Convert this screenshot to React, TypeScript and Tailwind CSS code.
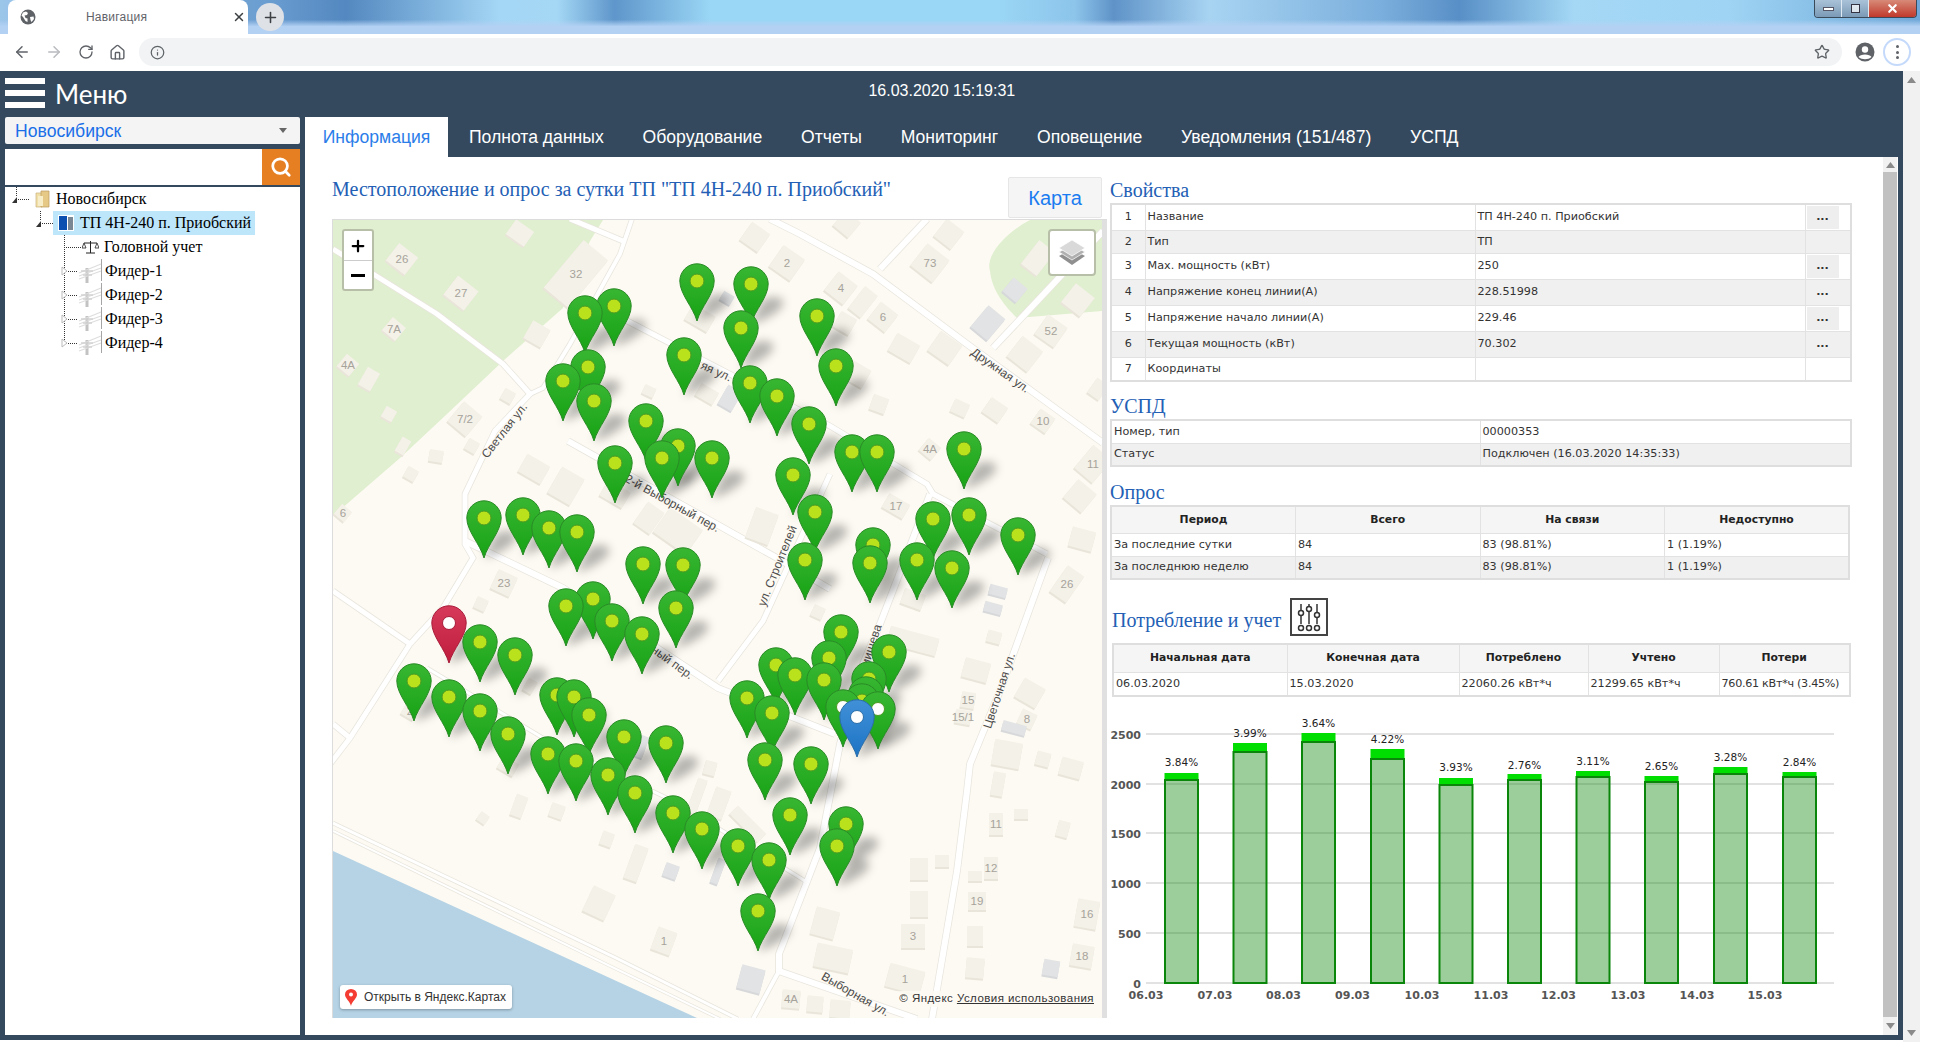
import { Fragment } from "react";
import { ArrowLeft, ArrowRight, RotateCw, Home, Info, Star, Plus, X, Search } from "lucide-react";

const TABS = ["Полнота данных", "Оборудование", "Отчеты", "Мониторинг", "Оповещение", "Уведомления (151/487)", "УСПД"];

const PROPS = [
  ["1", "Название", "ТП 4Н-240 п. Приобский", "btn"],
  ["2", "Тип", "ТП", ""],
  ["3", "Max. мощность (кВт)", "250", "btn"],
  ["4", "Напряжение конец линии(А)", "228.51998", "dots"],
  ["5", "Напряжение начало линии(А)", "229.46", "btn"],
  ["6", "Текущая мощность (кВт)", "70.302", "dots"],
  ["7", "Координаты", "", ""],
];

// dot centres of the map pins, in page pixels
const PINS: [number, number][] = [
  [697, 280], [751, 283], [817, 315], [741, 327], [614, 305], [585, 312], [588, 366], [563, 380], [594, 400],
  [684, 354], [750, 382], [777, 395], [809, 423], [836, 365], [646, 420], [678, 445], [662, 457], [712, 457],
  [615, 462], [793, 474], [852, 451], [877, 451], [964, 448], [815, 511], [805, 559], [484, 517], [523, 514],
  [549, 527], [577, 531], [643, 563], [683, 564], [676, 607], [593, 598], [566, 605], [612, 620], [642, 633],
  [873, 544], [870, 562], [933, 518], [969, 514], [1018, 534], [917, 559], [952, 567], [480, 641], [515, 654],
  [414, 680], [449, 696], [480, 710], [508, 733], [557, 694], [574, 696], [589, 714], [624, 736], [666, 742],
  [548, 753], [576, 760], [608, 774], [635, 792], [673, 812], [702, 828], [738, 845], [769, 859], [758, 910],
  [790, 814], [846, 823], [837, 845], [765, 759], [811, 763], [772, 712], [747, 697], [776, 664], [795, 674],
  [824, 679], [829, 657], [841, 631], [889, 651], [869, 678], [866, 693], [862, 700],
].sort((a, b) => a[1] - b[1]) as [number, number][];
const WHITE_PINS: [number, number][] = [[843, 706], [878, 708]];

const ROADS: [string, number][] = [
  ["M333 248L373 273L437 313L503 363L530 393L495 430L465 493L465 543L473 557L443 607L410 643L350 737L330 763", 5],
  ["M530 393L543 387L570 343L620 253L632 218", 4],
  ["M570 218L623 240", 5],
  ["M770 218L800 233L873 273L967 343L1103 442", 6],
  ["M880 268L927 218", 6],
  ["M993 347L1103 230", 6],
  ["M568 440L777 557L830 588", 6],
  ["M612 312L830 425L927 483L933 493L1047 553", 5],
  ["M1048 557L1000 690L970 763L967 790L957 870L932 1018", 6],
  ["M830 473L763 620L718 680", 5],
  ["M930 493L880 623L863 663L840 743L820 847L779 953L779 970L917 1018", 6],
  ["M779 970L753 1018", 4],
  ["M465 540L563 587L657 647L718 687L835 733", 6],
  ["M333 590L410 643", 5],
  ["M333 723L350 737", 5],
  ["M427 667L543 737L673 800L789 870L805 880", 3],
  ["M333 822L616 957L738 1018", 3],
  ["M333 830L610 965L720 1018", 2],
];

// cx, cy, w, h, rotation, label, grey
const BLDS: [number, number, number, number, number, string?, boolean?][] = [
  [402, 258, 24, 22, 38, "26"], [461, 292, 26, 24, 38, "27"], [394, 328, 17, 17, 40, "7A"], [348, 364, 16, 16, 40, "4A"],
  [369, 378, 14, 20, 30], [520, 232, 22, 18, 35], [576, 273, 32, 62, 40, "32"], [537, 333, 20, 20, 30],
  [465, 418, 24, 26, 40, "7/2"], [508, 395, 12, 12, 30], [389, 413, 12, 12, 30], [403, 445, 10, 16, 30],
  [472, 445, 12, 12, 30], [436, 455, 14, 12, 10], [411, 473, 12, 12, 30], [343, 512, 13, 13, 40, "6"],
  [534, 468, 26, 20, 30], [566, 485, 26, 30, 30], [649, 517, 20, 26, 35], [678, 530, 40, 30, 35], [762, 525, 24, 32, 20],
  [504, 582, 21, 21, 25, "23"], [481, 603, 12, 12, 25], [787, 262, 26, 26, 35, "2"], [755, 236, 22, 22, 35],
  [727, 297, 12, 10, 30, undefined, true], [700, 317, 26, 18, 30], [730, 397, 16, 22, 30, undefined, true],
  [707, 393, 20, 14, 30], [649, 390, 12, 10, 25], [615, 493, 26, 18, 30], [930, 262, 28, 28, 38, "73"],
  [949, 233, 22, 22, 38], [847, 223, 20, 20, 40], [841, 287, 24, 24, 38, "4"], [863, 301, 16, 28, 38], [883, 316, 22, 22, 38, "6"],
  [904, 347, 26, 20, 30], [945, 347, 26, 24, 35], [1025, 353, 26, 26, 38], [1051, 330, 24, 24, 35, "52"],
  [988, 322, 22, 28, 40, undefined, true], [1015, 289, 18, 18, 40, undefined, true], [1038, 257, 20, 30, 38], [1078, 299, 24, 24, 38],
  [879, 403, 16, 16, 20], [960, 407, 16, 14, 25], [995, 409, 20, 18, 35], [1043, 420, 18, 18, 35, "10"], [930, 448, 16, 16, 40, "4A"],
  [1093, 463, 24, 30, 40, "11"], [1080, 495, 24, 24, 40], [1098, 388, 14, 18, 35], [857, 373, 22, 20, 30], [845, 322, 18, 18, 30],
  [896, 505, 24, 16, 30, "17"], [1082, 538, 24, 20, 15], [1067, 583, 20, 32, 35, "26"], [998, 590, 18, 10, 15, undefined, true],
  [993, 607, 18, 10, 15, undefined, true], [994, 636, 14, 12, 15], [976, 669, 26, 20, 15], [1030, 692, 24, 22, 30],
  [968, 699, 14, 16, 10, "15"], [963, 716, 16, 14, 10, "15/1"], [1027, 718, 16, 16, 25, "8"], [1014, 727, 24, 10, 15, undefined, true],
  [1007, 753, 28, 26, 10], [1043, 758, 14, 14, 15], [1071, 767, 22, 18, 15], [818, 611, 12, 12, 25], [913, 640, 50, 18, 15],
  [913, 598, 22, 16, 20], [996, 823, 14, 22, 0, "11"], [1021, 813, 14, 10, 0], [1063, 828, 12, 16, 15], [991, 867, 14, 22, 0, "12"],
  [942, 860, 14, 12, 0], [919, 868, 18, 22, 0], [975, 875, 14, 10, 0], [977, 900, 18, 18, 0, "19"], [919, 903, 18, 26, 0],
  [1087, 913, 22, 28, 10, "16"], [825, 922, 24, 28, 15], [913, 935, 24, 24, 0, "3"], [975, 935, 16, 20, 0], [1082, 955, 22, 22, 10, "18"],
  [833, 957, 36, 24, 12], [1051, 967, 16, 16, 10, undefined, true], [975, 967, 18, 20, 5], [905, 978, 36, 24, 15, "1"],
  [751, 978, 24, 24, 15, undefined, true], [791, 998, 18, 18, 5, "4A"], [815, 1003, 16, 16, 5], [840, 1008, 20, 18, 5],
  [664, 940, 20, 24, 20, "1"], [599, 902, 24, 28, 25], [636, 862, 14, 36, 20], [671, 870, 14, 14, 20, undefined, true],
  [718, 870, 8, 26, 20, undefined, true], [697, 795, 10, 36, 20], [719, 802, 16, 30, 20], [748, 823, 40, 12, 45], [710, 767, 12, 14, 15],
  [607, 838, 12, 14, 20], [519, 805, 12, 22, 20], [557, 810, 14, 14, 20], [483, 817, 10, 10, 35], [998, 783, 12, 24, 10],
  [410, 710, 14, 14, 30, "2"], [508, 765, 18, 14, 30, "6"], [620, 770, 18, 14, 30, "6"], [530, 685, 10, 14, 30], [624, 745, 12, 22, 20, undefined, true], [640, 745, 12, 22, 20, undefined, true],
];

const STREETS: [string, number, number, number][] = [
  ["Дружная ул.", 1000, 370, 35], ["Светлая ул.", 505, 430, -52], ["2-й Выборный пер.", 672, 503, 29],
  ["Цветочная ул.", 1000, 690, -72], ["ул. Строителей", 778, 565, -68], ["яя ул.", 716, 371, 24],
  ["мишева", 872, 645, -72], ["Выборная ул.", 855, 994, 30], ["ный пер.", 672, 662, 36],
];

// chart data: x of the bar, top of the "consumed" block, top of the "counted" bar, label y, label
const BARS: [number, number, number, number, string][] = [
  [1164, 773, 780, 762, "3.84%"], [1232.5, 743, 752, 733, "3.99%"], [1301, 733, 742, 723, "3.64%"],
  [1370, 749, 759, 739, "4.22%"], [1438.5, 778, 785, 767, "3.93%"], [1507, 774, 780, 765, "2.76%"],
  [1575.5, 771, 777, 761, "3.11%"], [1644, 776, 782, 766, "2.65%"], [1713, 767, 774, 757, "3.28%"], [1782, 772, 777, 762, "2.84%"],
];
const GRID: [string, number][] = [["2500", 734], ["2000", 784], ["1500", 833], ["1000", 883], ["500", 933], ["0", 983]];
const DATES: [string, number][] = [
  ["06.03", 1146], ["07.03", 1215], ["08.03", 1283.5], ["09.03", 1352.5], ["10.03", 1422],
  ["11.03", 1491], ["12.03", 1558.5], ["13.03", 1628], ["14.03", 1697], ["15.03", 1765],
];

const PIN_PATH = "M18 58C14 44 .8 31 .8 18A17.2 17.2 0 0 1 35.2 18C35.2 31 22 44 18 58Z";

function Pin({ x, y, kind = "green" }: { x: number; y: number; kind?: "green" | "white" | "red" | "blue" }) {
  const fill = kind === "red" ? "url(#pin-red)" : kind === "blue" ? "url(#pin-blue)" : "url(#pin-green)";
  const line = kind === "red" ? "#a81c3a" : kind === "blue" ? "#2b6ea8" : "#2a8a26";
  return (
    <svg
      className="absolute"
      style={{ left: x - 333 - 18, top: y - 219 - 18 }}
      width="36"
      height="58"
      viewBox="0 0 36 58"
    >
      <path d={PIN_PATH} fill={fill} stroke={line} strokeWidth="1" />
      {kind === "green" ? (
        <circle cx="18" cy="18" r="7" fill="#b9e21c" stroke="#4c9a22" strokeWidth="1" />
      ) : (
        <circle cx="18" cy="18" r="6.5" fill="#fff" stroke={kind === "white" ? "#4c9a22" : line} strokeWidth="1" />
      )}
    </svg>
  );
}

function MapBase() {
  return (
    <svg className="absolute inset-0" width="769" height="798" viewBox="333 219 769 798">
      <defs>
        <linearGradient id="pin-green" x1="0" y1="0" x2="0" y2="1">
          <stop offset="0" stopColor="#38b632" />
          <stop offset="1" stopColor="#18a316" />
        </linearGradient>
        <linearGradient id="pin-red" x1="0" y1="0" x2="0" y2="1">
          <stop offset="0" stopColor="#d63a5a" />
          <stop offset="1" stopColor="#c01c3c" />
        </linearGradient>
        <linearGradient id="pin-blue" x1="0" y1="0" x2="0" y2="1">
          <stop offset="0" stopColor="#4190d8" />
          <stop offset="1" stopColor="#1c74c4" />
        </linearGradient>
        <filter id="pin-blur" x="-20%" y="-20%" width="140%" height="140%">
          <feGaussianBlur stdDeviation="5" />
        </filter>
      </defs>
      <rect x="333" y="219" width="769" height="798" fill="#fdfaf3" />
      <path d="M333 219H603L590 240L563 307L503 360L447 413L400 457L333 515Z" fill="#e0efcf" />
      <path d="M1030 219C1005 232 985 255 990 270C992 290 1005 305 1017 317L1102 310V219Z" fill="#e0efcf" />
      <path d="M333 850L697 1017H333Z" fill="#b5d3e5" />
      {ROADS.map(([d, w], i) => (
        <path key={`c${i}`} d={d} fill="none" stroke="#e8e5dd" strokeWidth={w + 1.5} />
      ))}
      {ROADS.map(([d, w], i) => (
        <path key={`r${i}`} d={d} fill="none" stroke="#ffffff" strokeWidth={w} />
      ))}
      {BLDS.map(([x, y, w, h, r, label, grey], i) => (
        <Fragment key={i}>
          <g transform={`translate(${x} ${y}) rotate(${r})`}>
            <rect x={-w / 2} y={-h / 2 + 2} width={w} height={h} fill={grey ? "#d6d8da" : "#e9e5da"} />
            <rect x={-w / 2} y={-h / 2} width={w} height={h} fill={grey ? "#e2e3e4" : "#f4f1e8"} />
          </g>
          {label && (
            <text x={x} y={y + 4} textAnchor="middle" fontSize="11.5" fill="#a6a39b" fontFamily="Liberation Sans, sans-serif">
              {label}
            </text>
          )}
        </Fragment>
      ))}
      {STREETS.map(([t, x, y, r]) => (
        <text
          key={t}
          transform={`translate(${x} ${y}) rotate(${r})`}
          textAnchor="middle"
          dominantBaseline="middle"
          fontSize="12"
          fill="#4c4c4c"
          stroke="#fdfaf3"
          strokeWidth="2"
          paintOrder="stroke"
          fontFamily="Liberation Sans, sans-serif"
        >
          {t}
        </text>
      ))}
      <g filter="url(#pin-blur)" fill="#000" fillOpacity="0.28">
        {[...PINS, ...WHITE_PINS, [449, 622], [857, 716]].map(([x, y], i) => (
          <path key={i} transform={`translate(${x - 18} ${y - 18})`} d="M18 58L28 36C36 28 52 30 50 38C48 46 28 56 18 58Z" />
        ))}
      </g>
    </svg>
  );
}

function MapView() {
  return (
    <div className="relative w-[769px] h-[798px] overflow-hidden">
      <MapBase />
      {PINS.map(([x, y]) => (
        <Pin key={`${x}-${y}`} x={x} y={y} />
      ))}
      {WHITE_PINS.map(([x, y]) => (
        <Pin key={`${x}-${y}`} x={x} y={y} kind="white" />
      ))}
      <Pin x={449} y={622} kind="red" />
      <Pin x={857} y={716} kind="blue" />

      <div className="absolute left-[9px] top-[9px] w-[32px] h-[62px] flex flex-col rounded-[3px] border-2 border-[#b8bfa8] bg-white">
        <div className="h-[30px] flex items-center justify-center border-b border-[#ccc]">
          <Plus size={18} strokeWidth={3} className="text-black" />
        </div>
        <div className="flex-1 flex items-center justify-center">
          <div className="w-[14px] h-[3px] bg-black" />
        </div>
      </div>

      <div className="absolute left-[715px] top-[9px] w-[48px] h-[47px] flex items-center justify-center rounded-[4px] border-2 border-[#b8bfa8] bg-white">
        <svg width="28" height="26" viewBox="0 0 28 26">
          <path d="M1 16L14 9L27 16L14 25Z" fill="#8f8f8f" />
          <path d="M1 12L14 5L27 12L14 20Z" fill="#b0b0b0" stroke="#fff" strokeWidth=".7" />
          <path d="M1 8L14 0L27 8L14 16Z" fill="#d9d9d9" stroke="#fff" strokeWidth=".7" />
        </svg>
      </div>

      <div className="absolute left-[7px] top-[765px] w-[172px] h-[24px] flex items-center gap-[7px] pl-[5px] rounded-[3px] bg-white shadow-[0_1px_3px_rgba(0,0,0,0.3)] font-['Liberation_Sans'] text-[12px] text-[#333]">
        <svg width="12" height="17" viewBox="0 0 12 17">
          <path d="M6 17C5 12 0 9.500 0 5.500A6 5.500 0 0 1 12 5.500C12 9.500 7 12 6 17Z" fill="#f43c33" />
          <circle cx="6" cy="5.500" r="2" fill="#fff" />
        </svg>
        Открыть в Яндекс.Картах
      </div>

      <div className="absolute right-[8px] top-[771px] h-[16px] flex items-center pl-1 bg-[#fdfaf3cc] font-['Liberation_Sans'] text-[11.5px] tracking-[0.45px] text-[#333]">
        © Яндекс&nbsp;<span className="underline">Условия использования</span>
      </div>
    </div>
  );
}

function Connector({ width, v, h, tri }: { width: number; v: "top" | "full" | "half"; h: number; tri?: "dark" | "open" }) {
  const yEnd = v === "top" ? 10 : v === "half" ? 12 : 24;
  return (
    <svg width={width} height="24" className="shrink-0">
      <path d={`M11.500 0V${yEnd}`} stroke="#333" strokeDasharray="1 1" fill="none" />
      <path d={`M11 12.500H${h}`} stroke="#333" strokeDasharray="1 1" fill="none" />
      {tri === "dark" && <path d="M7 16L12 16L12 10Z" fill="#333" />}
      {tri === "open" && <path d="M9 8L14 12L9 16Z" fill="#fff" stroke="#bbb" />}
    </svg>
  );
}

function PoleIcon() {
  return (
    <svg width="24" height="24" viewBox="0 0 24 24" className="shrink-0">
      <path d="M9 24V9" stroke="#c2c2c2" strokeWidth="3" />
      <path d="M1 14L23 5M1 17L23 9M1 20L23 12" stroke="#dedede" strokeWidth="1.2" fill="none" />
      <path d="M3 12L15 12M5 16H14" stroke="#d2d2d2" strokeWidth="1.500" />
      <path d="M23.500 0V22" stroke="#a5a5a5" strokeWidth="1" />
    </svg>
  );
}

function TreeRows() {
  const rowText = "font-['Liberation_Serif'] text-[16px] text-black whitespace-nowrap";
  return (
    <div className="flex-1 bg-white">
      <div className="flex items-center h-6">
        <Connector width={30} v="top" h={24} tri="dark" />
        <svg width="15" height="18" viewBox="0 0 15 18" className="shrink-0">
          <path d="M1 3H7V17H1Z" fill="#f1dfa8" stroke="#c9b37a" strokeWidth=".7" />
          <path d="M6 1H14V17H6Z" fill="#e6c987" stroke="#b99a5b" strokeWidth=".7" />
          <path d="M3 6H8V16H3Z" fill="#f7edc9" />
        </svg>
        <span className={`ml-[6px] ${rowText}`}>Новосибирск</span>
      </div>
      <div className="flex items-center h-6">
        <div className="w-[24px] shrink-0" />
        <Connector width={24} v="top" h={24} tri="dark" />
        <div className="flex items-center h-6 w-[202px] bg-[#bde6fb] pl-[5px]">
          <svg width="16" height="16" viewBox="0 0 16 16" className="shrink-0">
            <rect width="16" height="16" fill="#fff" />
            <rect x="1" y="1" width="8" height="14" fill="#0b4fb0" />
            <rect x="10" y="2" width="5" height="13" fill="#7a8794" />
          </svg>
          <span className={`ml-[6px] ${rowText}`}>ТП 4Н-240 п. Приобский</span>
        </div>
      </div>
      <div className="flex items-center h-6">
        <div className="w-[48px] shrink-0" />
        <Connector width={29} v="full" h={29} />
        <svg width="17" height="14" viewBox="0 0 17 14" className="shrink-0">
          <path d="M8.500 1V13M4 13H13M2 3H15" stroke="#222" strokeWidth="1" fill="none" />
          <path d="M2 3L0 8H4ZM15 3L13 8H17Z" fill="#fff" stroke="#222" strokeWidth=".8" />
        </svg>
        <span className={`ml-[5px] ${rowText}`}>Головной учет</span>
      </div>
      {["Фидер-1", "Фидер-2", "Фидер-3", "Фидер-4"].map((f, i) => (
        <div key={f} className="flex items-center h-6">
          <div className="w-[48px] shrink-0" />
          <Connector width={25} v={i === 3 ? "half" : "full"} h={25} tri="open" />
          <PoleIcon />
          <span className={`ml-[3px] ${rowText}`}>{f}</span>
        </div>
      ))}
    </div>
  );
}

function SlidersIcon() {
  return (
    <svg width="38" height="38" viewBox="0 0 38 38" className="shrink-0">
      <rect x="1" y="1" width="36" height="36" fill="#fff" stroke="#444" strokeWidth="2" />
      <g stroke="#333" strokeWidth="1.500" fill="none">
        <path d="M11 6V26M19 6V26M27 6V26" />
        <circle cx="11" cy="15" r="2.500" fill="#fff" />
        <circle cx="19" cy="11" r="2.500" fill="#fff" />
        <circle cx="27" cy="17" r="2.500" fill="#fff" />
        <circle cx="11" cy="30" r="2.500" />
        <circle cx="19" cy="30" r="2.500" />
        <circle cx="27" cy="30" r="2.500" />
      </g>
    </svg>
  );
}

function Chart() {
  return (
    <svg width="776" height="315" viewBox="1107 700 776 315" className="block">
      {GRID.map(([t, y]) => (
        <Fragment key={t}>
          <line x1="1146" x2="1834" y1={y} y2={y} stroke="#d9d9d9" strokeWidth="1.500" />
          <text x="1141" y={y + 5} textAnchor="end" fontSize="11" fontWeight="700" fill="#555" fontFamily="DejaVu Sans, sans-serif">
            {t}
          </text>
        </Fragment>
      ))}
      {BARS.map(([x, top, bar, ly, label]) => (
        <Fragment key={label}>
          <rect x={x + 0.5} y={top} width="34" height={bar - top} fill="#00dd00" />
          <rect x={x + 1} y={bar} width="33" height={983 - bar} fill="#008000" fillOpacity="0.39" stroke="#0a860a" strokeWidth="2" />
          <text x={x + 17.5} y={ly + 4} textAnchor="middle" fontSize="10.500" fill="#222" fontFamily="DejaVu Sans, sans-serif">
            {label}
          </text>
        </Fragment>
      ))}
      {DATES.map(([t, x]) => (
        <text key={t} x={x} y="999" textAnchor="middle" fontSize="11" fontWeight="700" fill="#555" fontFamily="DejaVu Sans, sans-serif">
          {t}
        </text>
      ))}
    </svg>
  );
}

function ScrollArrow({ up }: { up?: boolean }) {
  return (
    <svg width="9" height="6" viewBox="0 0 9 6">
      <path d={up ? "M4.500 0L9 6H0Z" : "M4.500 6L9 0H0Z"} fill="#8a8a8a" />
    </svg>
  );
}

const cell = "border border-[#e2e2e2] px-[2px] pt-[1px] pb-0 align-middle font-normal";
const heading = "font-['Liberation_Serif'] text-[20px] leading-[24px] text-[#2360b5]";
const tableBox = "table-fixed border-collapse border-2 border-[#dedede] font-['DejaVu_Sans'] text-[11.2px] text-[#333]";
const headCell = "border border-[#e2e2e2] px-[2px] align-middle text-center font-bold text-[10.8px] text-[#222]";

function RightPanel() {
  return (
    <div className="w-[776px] flex flex-col pl-[3px]">
      <div className={`mt-[21px] h-[24px] ${heading}`}>Свойства</div>
      <table className={`w-[740px] mt-[1px] ${tableBox}`}>
        <colgroup>
          <col className="w-[34px]" />
          <col className="w-[330px]" />
          <col className="w-[330px]" />
          <col className="w-[46px]" />
        </colgroup>
        <tbody>
          {PROPS.map(([n, name, value, action], i) => (
            <tr key={n} className={`${i === 1 ? "h-[23px]" : i === 6 ? "h-[24px]" : "h-[26px]"} ${i % 2 ? "bg-[#f0f0f0]" : "bg-white"}`}>
              <td className={`${cell} text-center`}>{n}</td>
              <td className={cell}>{name}</td>
              <td className={cell}>{value}</td>
              <td className={`${cell} pl-[1px] !pt-0`}>
                {action && (
                  <div className={`w-[32px] h-[23px] flex items-center justify-center font-bold ${action === "btn" ? "bg-[#eeeeee]" : ""}`}>...</div>
                )}
              </td>
            </tr>
          ))}
        </tbody>
      </table>

      <div className={`mt-[12px] h-[24px] ${heading}`}>УСПД</div>
      <table className={`w-[740px] mt-[1px] ${tableBox}`}>
        <colgroup>
          <col className="w-[369px]" />
          <col className="w-[371px]" />
        </colgroup>
        <tbody>
          <tr className="h-[23px] bg-white">
            <td className={cell}>Номер, тип</td>
            <td className={cell}>00000353</td>
          </tr>
          <tr className="h-[23px] bg-[#f0f0f0]">
            <td className={cell}>Статус</td>
            <td className={cell}>Подключен (16.03.2020 14:35:33)</td>
          </tr>
        </tbody>
      </table>

      <div className={`mt-[13px] h-[24px] ${heading}`}>Опрос</div>
      <table className={`w-[740px] mt-[1px] ${tableBox}`}>
        <thead>
          <tr className="h-[27px] bg-[#f5f5f5]">
            {["Период", "Всего", "На связи", "Недоступно"].map((h) => (
              <th key={h} className={headCell}>{h}</th>
            ))}
          </tr>
        </thead>
        <tbody>
          <tr className="h-[23px] bg-white">
            <td className={cell}>За последние сутки</td>
            <td className={cell}>84</td>
            <td className={cell}>83 (98.81%)</td>
            <td className={cell}>1 (1.19%)</td>
          </tr>
          <tr className="h-[23px] bg-[#f0f0f0]">
            <td className={cell}>За последнюю неделю</td>
            <td className={cell}>84</td>
            <td className={cell}>83 (98.81%)</td>
            <td className={cell}>1 (1.19%)</td>
          </tr>
        </tbody>
      </table>

      <div className="flex items-center gap-[9px] h-[38px] mt-[18px] pl-[2px]">
        <span className="mt-[6px] font-['Liberation_Serif'] text-[20px] text-[#2360b5] whitespace-nowrap">Потребление и учет</span>
        <SlidersIcon />
      </div>
      <table className={`w-[737px] ml-[2px] mt-[7px] ${tableBox}`}>
        <colgroup>
          <col className="w-[174px]" />
          <col className="w-[172px]" />
          <col className="w-[129px]" />
          <col className="w-[131px]" />
          <col className="w-[131px]" />
        </colgroup>
        <thead>
          <tr className="h-[28px] bg-[#f5f5f5]">
            {["Начальная дата", "Конечная дата", "Потреблено", "Учтено", "Потери"].map((h) => (
              <th key={h} className={headCell}>{h}</th>
            ))}
          </tr>
        </thead>
        <tbody>
          <tr className="h-[24px] bg-white">
            <td className={cell}>06.03.2020</td>
            <td className={cell}>15.03.2020</td>
            <td className={cell}>22060.26 кВт*ч</td>
            <td className={cell}>21299.65 кВт*ч</td>
            <td className={`${cell} whitespace-nowrap tracking-[-0.3px]`}>760.61 кВт*ч (3.45%)</td>
          </tr>
        </tbody>
      </table>
      <div className="-ml-[3px] mt-[3px]">
        <Chart />
      </div>
    </div>
  );
}

export default function App() {
  return (
    <div className="w-[1934px] h-[1042px] bg-white overflow-hidden font-['Liberation_Sans',sans-serif]">
      <div className="w-[1920px] h-[1042px] flex flex-col">
        {/* browser tab strip */}
        <div className="relative h-[34px] shrink-0 flex items-start bg-[linear-gradient(180deg,transparent_58%,#b3d1f3_78%),linear-gradient(90deg,#9cc5ea_0%,#6a9dd0_14%,#5388c0_18%,#a4d6f5_26%,#a5d8f5_29%,#5f96cb_32%,#9ad6f5_37%,#9ad6f5_52%,#8cc4ea_56%,#5f93c8_58%,#a8d4f2_63%,#7aaedc_72%,#588fc6_76%,#a4d8f5_82%,#9fd4f4_90%,#6fa8d8_100%)]">
          <div className="ml-[8px] w-[240px] h-[34px] flex items-center bg-white rounded-t-[8px]">
            <svg width="16" height="16" viewBox="0 0 16 16" className="ml-[12px]">
              <circle cx="8" cy="8" r="7.500" fill="#5f6368" />
              <path d="M3 3.500L6 2.500L8 4L7 6L4.500 6.500L5.500 9L7.500 9.500L7.500 13L5.500 12L3 8L1.500 6.500ZM10 8L13.500 7.500L14 10L11.500 13L10.500 11Z" fill="#fff" />
            </svg>
            <span className="ml-[50px] w-[146px] text-[12px] tracking-[0.2px] text-[#5f6368]">Навигация</span>
            <X size={14} strokeWidth={2.5} className="text-[#3c4043]" />
          </div>
          <div className="ml-[8px] mt-[3px] w-[28px] h-[28px] flex items-center justify-center rounded-full bg-[#dee1e6]">
            <Plus size={17} strokeWidth={2.2} className="text-[#3c4043]" />
          </div>
          <div className="ml-auto mr-[3px] flex h-[18px] rounded-b-[4px] border border-t-0 border-[#3a4a5a] overflow-hidden">
            <div className="w-[27px] flex items-center justify-center border-r border-[#dfe9f2] bg-[linear-gradient(180deg,#a9c2d8,#7b9ab6)]">
              <div className="w-[11px] h-[4px] bg-white border border-[#556]" />
            </div>
            <div className="w-[27px] flex items-center justify-center border-r border-[#dfe9f2] bg-[linear-gradient(180deg,#a9c2d8,#7b9ab6)]">
              <div className="w-[9px] h-[9px] bg-white/70 border border-[#334]" />
            </div>
            <div className="w-[47px] flex items-center justify-center bg-[linear-gradient(180deg,#d88a78,#c0392b)]">
              <X size={13} strokeWidth={4} className="text-white" />
            </div>
          </div>
        </div>

        {/* browser toolbar */}
        <div className="h-[37px] shrink-0 flex items-center pb-[1px] bg-white">
          <ArrowLeft size={18} className="ml-[13px] text-[#5f6368]" />
          <ArrowRight size={18} className="ml-[14px] text-[#b9bbbe]" />
          <RotateCw size={16} className="ml-[15px] text-[#5f6368]" />
          <Home size={17} className="ml-[15px] text-[#5f6368]" />
          <div className="ml-[13px] w-[1703px] h-[28px] flex items-center justify-between rounded-full bg-[#f1f3f4] px-[11px]">
            <Info size={15} className="text-[#5f6368]" />
            <Star size={16} className="mr-[1px] text-[#5f6368]" />
          </div>
          <svg width="20" height="20" viewBox="0 0 20 20" className="ml-[13px]">
            <circle cx="10" cy="10" r="9.500" fill="#5f6368" />
            <circle cx="10" cy="7.500" r="3.200" fill="#fff" />
            <path d="M3.500 15C5 11.500 15 11.500 16.500 15C13 18 7 18 3.500 15Z" fill="#fff" />
          </svg>
          <div className="ml-[8px] w-[28px] h-[28px] flex flex-col items-center justify-center gap-[2.5px] rounded-full border-2 border-[#c5dafb]">
            <div className="w-[3px] h-[3px] rounded-full bg-[#5f6368]" />
            <div className="w-[3px] h-[3px] rounded-full bg-[#5f6368]" />
            <div className="w-[3px] h-[3px] rounded-full bg-[#5f6368]" />
          </div>
        </div>

        {/* page */}
        <div className="flex-1 flex min-h-0">
          <div className="w-[1903px] flex flex-col mb-[2px] bg-[#34495e]">
            <div className="h-[46px] shrink-0 flex items-start text-white">
              <div className="ml-[5px] mt-[7px] w-[40px] h-[30px] flex flex-col justify-between">
                <div className="h-[6px] bg-white" />
                <div className="h-[6px] bg-white" />
                <div className="h-[6px] bg-white" />
              </div>
              <span className="ml-[10px] mt-[6px] font-['Lato'] text-[26px] leading-[34px]">Меню</span>
              <span className="ml-[741px] mt-[11px] text-[16px] leading-[18px] whitespace-nowrap">16.03.2020 15:19:31</span>
            </div>

            <div className="flex-1 flex min-h-0 pl-[5px] pr-[5px] pb-[5px] gap-[5px]">
              {/* left panel */}
              <div className="w-[295px] flex flex-col">
                <div className="h-[27px] shrink-0 flex items-center justify-between pl-[10px] pr-[13px] rounded-[2px] bg-[#f4f4f4]">
                  <span className="text-[17.6px] leading-[20px] text-[#1a6fe8]">Новосибирск</span>
                  <div className="w-0 h-0 border-x-[4px] border-x-transparent border-t-[5px] border-t-[#666]" />
                </div>
                <div className="h-[36px] shrink-0 mt-[5px] flex bg-white">
                  <div className="flex-1" />
                  <div className="w-[38px] flex items-center justify-center bg-[#e67e22]">
                    <Search size={22} strokeWidth={3} className="text-white" />
                  </div>
                </div>
                <div className="h-[2px] shrink-0" />
                <TreeRows />
              </div>

              {/* right panel */}
              <div className="flex-1 flex flex-col min-w-0">
                <div className="h-[40px] shrink-0 flex items-stretch text-[17.6px] leading-[20px]">
                  <div className="w-[143px] mr-[1.5px] flex items-center justify-center bg-white text-[#2b7de9]">Информация</div>
                  {TABS.map((t) => (
                    <div key={t} className="px-[19.4px] flex items-center text-white whitespace-nowrap">{t}</div>
                  ))}
                </div>
                <div className="flex-1 flex min-h-0 bg-white">
                  <div className="w-[802px] shrink-0 flex flex-col pl-[27px]">
                    <div className="h-[62px] shrink-0 flex items-start">
                      <span className="mt-[20px] font-['Liberation_Serif'] text-[20px] leading-[24px] text-[#2360b5] whitespace-nowrap">
                        Местоположение и опрос за сутки ТП "ТП 4Н-240 п. Приобский"
                      </span>
                      <div className="ml-auto mr-[5px] mt-[20px] w-[94px] h-[41px] flex items-center justify-center rounded-[2px] border border-[#e6e6e6] bg-[#f5f5f5] text-[20px] text-[#1a7cf0]">
                        Карта
                      </div>
                    </div>
                    <div className="flex border-t border-l border-[#dcdcdc] w-[775px]">
                      <MapView />
                      <div className="w-[5px] bg-[#e0e0e0]" />
                    </div>
                  </div>
                  <RightPanel />
                  <div className="w-[14px] shrink-0 flex flex-col items-center bg-[#f1f1f1]">
                    <div className="h-[15px] flex items-center"><ScrollArrow up /></div>
                    <div className="flex-1 w-full bg-[#c1c1c1]" />
                    <div className="h-[18px] flex items-center"><ScrollArrow /></div>
                  </div>
                </div>
              </div>
            </div>
          </div>

          {/* page scrollbar */}
          <div className="w-[17px] flex flex-col items-center justify-between py-[6px] bg-[#f1f1f1]">
            <ScrollArrow up />
            <ScrollArrow />
          </div>
        </div>
      </div>
    </div>
  );
}
